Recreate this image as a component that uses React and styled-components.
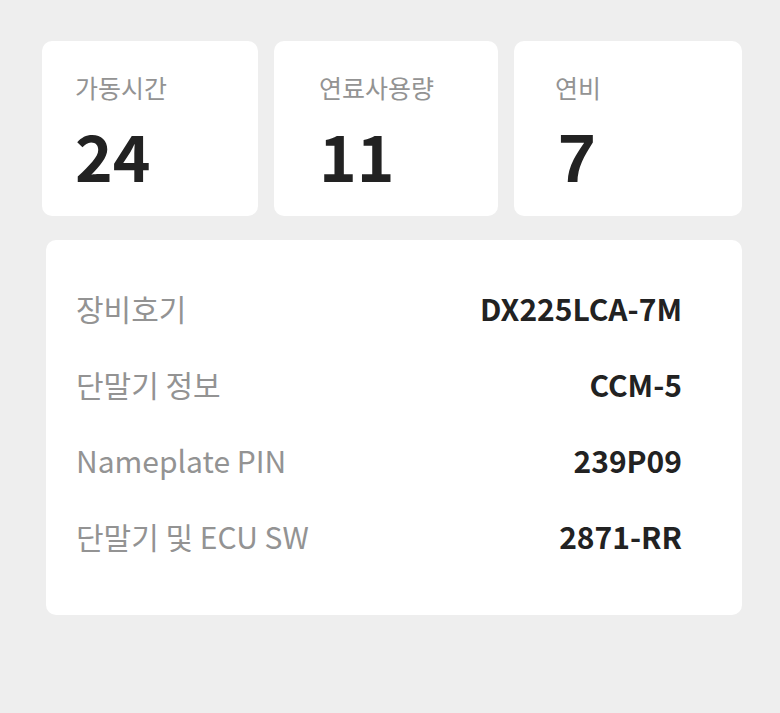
import React from 'react';
import styled, { createGlobalStyle } from 'styled-components';

const GlobalStyle = createGlobalStyle`
  body {
    margin: 0;
    background: #eeeeee;
    font-family: "Noto Sans CJK KR", "Noto Sans", sans-serif;
  }
`;

const Page = styled.div`
  padding: 41px 38px 0 42px;
`;

const StatGrid = styled.div`
  display: grid;
  grid-template-columns: 216px 224px 228px;
  gap: 16px;
`;

const StatCard = styled.div`
  height: 175px;
  box-sizing: border-box;
  background: #ffffff;
  border-radius: 10px;
  padding: 29px 0 0 ${p => p.$inset}px;
`;

const StatLabel = styled.div`
  margin-left: ${p => p.$shift || 0}px;
  font-size: 25px;
  line-height: 34px;
  color: #939393;
`;

const StatValue = styled.div`
  margin-top: ${p => (p.$alt ? '14px' : '10px')};
  font-family: ${p => (p.$alt ? '"Liberation Sans", Arial, sans-serif' : '"Noto Sans CJK KR", sans-serif')};
  font-size: ${p => (p.$alt ? '68px' : '64px')};
  font-weight: 700;
  line-height: 80px;
  color: #222222;
`;

const InfoCard = styled.div`
  margin: 24px 0 0 4px;
  height: 375px;
  box-sizing: border-box;
  background: #ffffff;
  border-radius: 10px;
  padding: 29.5px 60px 0 30px;
`;

const InfoRow = styled.div`
  display: flex;
  justify-content: space-between;
  align-items: baseline;
  height: 76px;
  line-height: 76px;
`;

const InfoLabel = styled.span`
  font-size: 30px;
  color: #939393;
`;

const InfoValue = styled.span`
  font-size: 30px;
  font-weight: 700;
  color: #222222;
`;

const stats = [
  { label: '가동시간', value: '24', inset: 33 },
  { label: '연료사용량', value: '11', inset: 45 },
  { label: '연비', value: '7', inset: 44, shift: -3, alt: true },
];

const info = [
  { label: '장비호기', value: 'DX225LCA-7M' },
  { label: '단말기 정보', value: 'CCM-5' },
  { label: 'Nameplate PIN', value: '239P09' },
  { label: '단말기 및 ECU SW', value: '2871-RR' },
];

const App = () => (
  <Page>
    <GlobalStyle />
    <StatGrid>
      {stats.map(s => (
        <StatCard key={s.label} $inset={s.inset}>
          <StatLabel $shift={s.shift}>{s.label}</StatLabel>
          <StatValue $alt={s.alt}>{s.value}</StatValue>
        </StatCard>
      ))}
    </StatGrid>
    <InfoCard>
      {info.map(row => (
        <InfoRow key={row.label}>
          <InfoLabel>{row.label}</InfoLabel>
          <InfoValue>{row.value}</InfoValue>
        </InfoRow>
      ))}
    </InfoCard>
  </Page>
);

export default App;
